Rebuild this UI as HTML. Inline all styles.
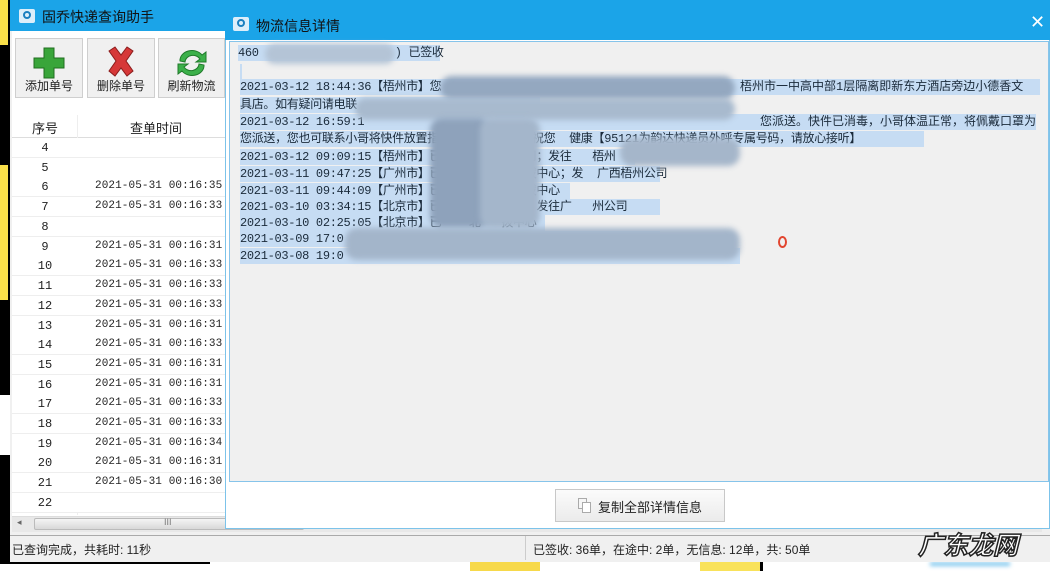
<!DOCTYPE html>
<html><head><meta charset="utf-8">
<style>
*{margin:0;padding:0;box-sizing:border-box}
body{width:1050px;height:571px;overflow:hidden;background:#fff;position:relative;font-family:"Liberation Sans","Noto Sans CJK SC",sans-serif;font-size:12px;color:#222}
.a{position:absolute}
.mono{font-family:"Liberation Mono","Noto Sans CJK SC",monospace}
.row{position:absolute;left:12px;width:213px;height:20px;border-bottom:1px solid #eee;background:#fff}
.row .n{position:absolute;left:0;width:66px;text-align:center;top:3px}
.row .t{position:absolute;left:83px;top:3px;font-size:11px;letter-spacing:0.1px}
.ln{position:absolute;left:240px;height:16px;background:#c6dcf3;white-space:nowrap;font-size:12px;line-height:16px;color:#1a2a3a;letter-spacing:-0.3px}
.blur{position:absolute;background:#9fb2c8;filter:blur(3px);border-radius:12px}
.btn{position:absolute;top:38px;width:68px;height:60px;background:#f0f0f0;border:1px solid #cfcfcf;text-align:center}
.btn span{position:absolute;bottom:3px;left:0;right:0;font-size:12px}
</style></head><body>
<div class="a" style="left:0;top:0;width:12px;height:571px;background:#000"></div>
<div class="a" style="left:0;top:0;width:8px;height:45px;background:#f9df4a"></div>
<div class="a" style="left:0;top:165px;width:8px;height:135px;background:#f9df4a"></div>
<div class="a" style="left:0;top:395px;width:10px;height:60px;background:#fff"></div>
<div class="a" style="left:0;top:560px;width:1050px;height:11px;background:#fff"></div>
<div class="a" style="left:0;top:560px;width:210px;height:4px;background:#000"></div>
<div class="a" style="left:470px;top:562px;width:70px;height:9px;background:#f7d94a"></div>
<div class="a" style="left:700px;top:562px;width:60px;height:9px;background:#f9e25a"></div>
<div class="a" style="left:760px;top:560px;width:3px;height:11px;background:#000"></div>
<div class="a" style="left:930px;top:562px;width:80px;height:4px;background:#7fc7ee;filter:blur(2px)"></div>
<div class="a" style="left:10px;top:0;width:1040px;height:562px;background:#f0f0f0"></div>
<div class="a" style="left:10px;top:0;width:1040px;height:31px;background:#1ba4e8"></div>
<div class="a" style="left:19px;top:9px;width:16px;height:14px;background:#dceefa;border-radius:2px"></div>
<div class="a" style="left:23px;top:11px;width:8px;height:8px;border:2px solid #1a7fc0;border-radius:50%"></div>
<div class="a" style="left:42px;top:7px;color:#111;font-size:14px">固乔快递查询助手</div>
<div class="a" style="left:12px;top:31px;width:213px;height:500px;background:#fff"></div>
<div class="btn" style="left:15px"><svg width="40" height="36" style="margin-top:6px" viewBox="0 0 40 36"><path d="M15 3h10v10h10v10H25v10H15V23H5V13h10z" fill="#39a53a" stroke="#1f6e1f"/></svg><span>添加单号</span></div>
<div class="btn" style="left:87px"><svg width="40" height="36" style="margin-top:6px" viewBox="0 0 40 36"><path d="M8 6l6-4 6 8 6-8 6 4-7 10 7 10-6 5-6-8-6 8-6-5 7-10z" fill="#d63838" stroke="#8b1c1c"/></svg><span>删除单号</span></div>
<div class="btn" style="left:158px;width:67px"><svg width="40" height="36" style="margin-top:6px" viewBox="0 0 40 36"><path d="M8 16a12 10 0 0 1 22-6l4-3v10H24l4-3a8 7 0 0 0-15 3z" fill="#3cb04a" stroke="#1f7a2a"/><path d="M32 20a12 10 0 0 1-22 6l-4 3V19h10l-4 3a8 7 0 0 0 15-3z" fill="#3cb04a" stroke="#1f7a2a"/></svg><span>刷新物流</span></div>
<div class="a" style="left:12px;top:115px;width:213px;height:23px;background:#fff;border-bottom:1px solid #ddd"></div>
<div class="a" style="left:77px;top:115px;width:1px;height:400px;background:#eee"></div>
<div class="a" style="left:32px;top:118px;font-size:13px">序号</div>
<div class="a" style="left:130px;top:118px;font-size:13px">查单时间</div>
<div class="mono">
<div class="row" style="top:138px"><div class="n">4</div></div>
<div class="row" style="top:158px"><div class="n">5</div></div>
<div class="row" style="top:177px"><div class="n">6</div><div class="t">2021-05-31 00:16:35</div></div>
<div class="row" style="top:197px"><div class="n">7</div><div class="t">2021-05-31 00:16:33</div></div>
<div class="row" style="top:217px"><div class="n">8</div></div>
<div class="row" style="top:237px"><div class="n">9</div><div class="t">2021-05-31 00:16:31</div></div>
<div class="row" style="top:256px"><div class="n">10</div><div class="t">2021-05-31 00:16:33</div></div>
<div class="row" style="top:276px"><div class="n">11</div><div class="t">2021-05-31 00:16:33</div></div>
<div class="row" style="top:296px"><div class="n">12</div><div class="t">2021-05-31 00:16:33</div></div>
<div class="row" style="top:316px"><div class="n">13</div><div class="t">2021-05-31 00:16:31</div></div>
<div class="row" style="top:335px"><div class="n">14</div><div class="t">2021-05-31 00:16:33</div></div>
<div class="row" style="top:355px"><div class="n">15</div><div class="t">2021-05-31 00:16:31</div></div>
<div class="row" style="top:375px"><div class="n">16</div><div class="t">2021-05-31 00:16:31</div></div>
<div class="row" style="top:394px"><div class="n">17</div><div class="t">2021-05-31 00:16:33</div></div>
<div class="row" style="top:414px"><div class="n">18</div><div class="t">2021-05-31 00:16:33</div></div>
<div class="row" style="top:434px"><div class="n">19</div><div class="t">2021-05-31 00:16:34</div></div>
<div class="row" style="top:453px"><div class="n">20</div><div class="t">2021-05-31 00:16:31</div></div>
<div class="row" style="top:473px"><div class="n">21</div><div class="t">2021-05-31 00:16:30</div></div>
<div class="row" style="top:493px"><div class="n">22</div></div>
</div>
<div class="a" style="left:12px;top:516px;width:1030px;height:16px;background:#e8e8e8;border-top:1px solid #ddd"></div>
<div class="a" style="left:34px;top:518px;width:270px;height:12px;background:linear-gradient(#f4f4f4,#d8d8d8);border:1px solid #bbb;border-radius:2px"></div>
<div class="a" style="left:17px;top:517px;font-size:9px;color:#666">◂</div>
<div class="a" style="left:164px;top:517px;font-size:9px;color:#777">III</div>
<div class="a" style="left:10px;top:535px;width:1040px;height:1px;background:#aaa"></div>
<div class="a" style="left:525px;top:536px;width:1px;height:24px;background:#ccc"></div>
<div class="a" style="left:12px;top:541px;font-size:12px">已查询完成，共耗时: 11秒</div>
<div class="a" style="left:533px;top:541px;font-size:12px">已签收: 36单，在途中: 2单，无信息: 12单，共: 50单</div>
<div class="a" style="left:918px;top:526px;font-size:25px;font-weight:bold;color:#fff;-webkit-text-stroke:1.5px #222;font-style:italic">广东龙网</div>
<div class="a" style="left:225px;top:10px;width:825px;height:519px;background:#fff;border:1px solid #7cc3ea;border-top:none"></div>
<div class="a" style="left:225px;top:10px;width:825px;height:30px;background:#1ba4e8"></div>
<div class="a" style="left:233px;top:17px;width:16px;height:14px;background:#dceefa;border-radius:2px"></div>
<div class="a" style="left:237px;top:19px;width:8px;height:8px;border:2px solid #1a7fc0;border-radius:50%"></div>
<div class="a" style="left:256px;top:16px;color:#111;font-size:14px">物流信息详情</div>
<div class="a" style="left:1030px;top:12px;color:#fff;font-size:18px">✕</div>
<div class="a" style="left:229px;top:41px;width:820px;height:441px;background:#f0f0f0;border:1px solid #86c4ea"></div>
<div class="a mono" style="left:0;top:0">
<div class="ln" style="top:45px;left:238px;width:202px">460<span style="display:inline-block;width:136px"></span>) 已签收</div>
<div class="ln" style="top:64px;width:2px"></div>
<div class="ln" style="top:79px;width:800px">2021-03-12 18:44:36【梧州市】您</div>
<div class="a" style="left:740px;top:79px;font-size:12px;line-height:16px;white-space:nowrap;color:#1a2a3a">梧州市一中高中部1层隔离即新东方酒店旁边小德香文</div>
<div class="ln" style="top:97px;width:300px">具店。如有疑问请电联</div>
<div class="ln" style="top:114px;width:684px">2021-03-12 16:59:1</div>
<div class="a" style="left:760px;top:114px;font-size:12px;line-height:16px;white-space:nowrap;color:#1a2a3a;background:#c6dcf3">您派送。快件已消毒，小哥体温正常，将佩戴口罩为</div>
<div class="ln" style="top:131px;width:684px">您派送，您也可联系小哥将快件放置指&nbsp;&nbsp;&nbsp;收&nbsp;&nbsp;快递柜，祝您&nbsp;&nbsp;健康【95121为韵达快递员外呼专属号码，请放心接听】</div>
<div class="ln" style="top:149px;width:395px">2021-03-12 09:09:15【梧州市】已&nbsp;&nbsp;&nbsp;&nbsp;广&nbsp;&nbsp;&nbsp;州公司；发往&nbsp;&nbsp;&nbsp;梧州</div>
<div class="ln" style="top:166px;width:420px">2021-03-11 09:47:25【广州市】已&nbsp;&nbsp;&nbsp;&nbsp;广&nbsp;&nbsp;&nbsp;州分拨中心；发&nbsp;&nbsp;广西梧州公司</div>
<div class="ln" style="top:183px;width:330px">2021-03-11 09:44:09【广州市】已&nbsp;&nbsp;&nbsp;&nbsp;广&nbsp;&nbsp;&nbsp;州分拨中心</div>
<div class="ln" style="top:199px;width:420px">2021-03-10 03:34:15【北京市】已&nbsp;&nbsp;&nbsp;&nbsp;&nbsp;&nbsp;&nbsp;拨中心；发往广&nbsp;&nbsp;&nbsp;州公司</div>
<div class="ln" style="top:215px;width:305px">2021-03-10 02:25:05【北京市】已&nbsp;&nbsp;&nbsp;&nbsp;北&nbsp;&nbsp;&nbsp;拨中心</div>
<div class="ln" style="top:231px;width:420px">2021-03-09 17:0</div>
<div class="ln" style="top:248px;width:500px">2021-03-08 19:0</div>
</div>
<div class="blur" style="left:265px;top:44px;width:130px;height:20px;background:#b4c4d6"></div>
<div class="blur" style="left:440px;top:76px;width:295px;height:24px;background:#94a8c0"></div>
<div class="blur" style="left:355px;top:98px;width:380px;height:22px;background:#a8bace"></div>
<div class="blur" style="left:430px;top:118px;width:60px;height:110px;background:#8ea2bb"></div>
<div class="blur" style="left:480px;top:118px;width:60px;height:110px;background:#a4b6cb"></div>
<div class="blur" style="left:620px;top:138px;width:120px;height:28px;background:#a5b6ca"></div>
<div class="blur" style="left:345px;top:228px;width:395px;height:32px;background:#a3b5ca"></div>
<div class="a" style="left:778px;top:236px;width:9px;height:12px;border:2px solid #e2452f;border-radius:50%"></div>
<div class="a" style="left:555px;top:489px;width:170px;height:33px;background:linear-gradient(#fbfbfb,#ebebeb);border:1px solid #c8c8c8"></div>
<div class="a" style="left:578px;top:498px;width:9px;height:11px;border:1px solid #aaa;background:#f6f6f6"></div>
<div class="a" style="left:582px;top:502px;width:9px;height:11px;border:1px solid #aaa;background:#fff"></div>
<div class="a" style="left:598px;top:497px;font-size:13px">复制全部详情信息</div>
</body></html>
